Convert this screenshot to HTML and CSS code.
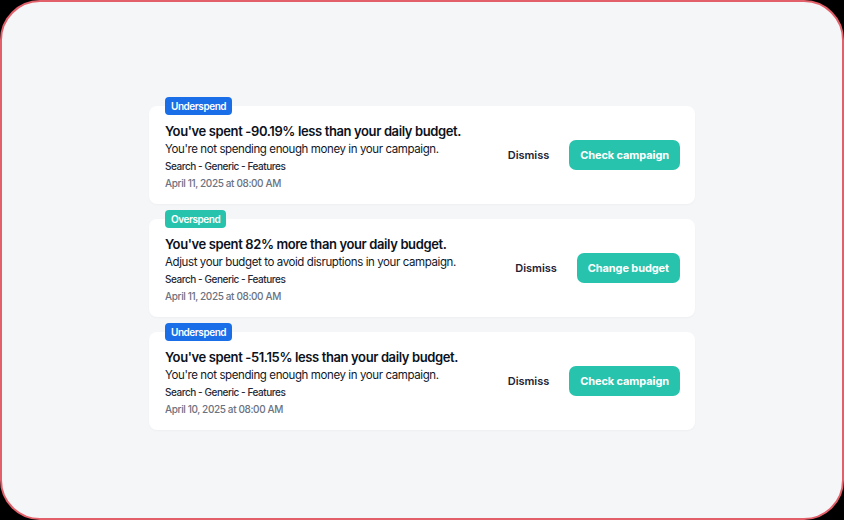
FILE: index.html
```html
<!DOCTYPE html>
<html>
<head>
<meta charset="utf-8">
<link rel="stylesheet" href="styles.css">
</head>
<body>
<div class="frame">
  <div class="list">
    <div class="item">
      <span class="badge badge-under">Underspend</span>
      <div class="card">
        <div class="info">
          <div class="title">You've spent -90.19% less than your daily budget.</div>
          <div class="desc">You're not spending enough money in your campaign.</div>
          <div class="campaign">Search - Generic - Features</div>
          <div class="date">April 11, 2025 at 08:00 AM</div>
        </div>
        <div class="actions">
          <button class="dismiss">Dismiss</button>
          <button class="primary">Check campaign</button>
        </div>
      </div>
    </div>
    <div class="item">
      <span class="badge badge-over">Overspend</span>
      <div class="card">
        <div class="info">
          <div class="title">You've spent 82% more than your daily budget.</div>
          <div class="desc">Adjust your budget to avoid disruptions in your campaign.</div>
          <div class="campaign">Search - Generic - Features</div>
          <div class="date">April 11, 2025 at 08:00 AM</div>
        </div>
        <div class="actions">
          <button class="dismiss">Dismiss</button>
          <button class="primary">Change budget</button>
        </div>
      </div>
    </div>
    <div class="item">
      <span class="badge badge-under">Underspend</span>
      <div class="card">
        <div class="info">
          <div class="title">You've spent -51.15% less than your daily budget.</div>
          <div class="desc">You're not spending enough money in your campaign.</div>
          <div class="campaign">Search - Generic - Features</div>
          <div class="date">April 10, 2025 at 08:00 AM</div>
        </div>
        <div class="actions">
          <button class="dismiss">Dismiss</button>
          <button class="primary">Check campaign</button>
        </div>
      </div>
    </div>
  </div>
</div>
</body>
</html>
```

FILE: styles.css
```css
* { box-sizing: border-box; }
html, body { margin: 0; padding: 0; background: #000; }
body {
  width: 844px;
  height: 520px;
  font-family: Inter, "Noto Sans", sans-serif;
  color: #0f172a;
}
.frame {
  width: 844px;
  height: 520px;
  border: 2px solid #e2606a;
  border-radius: 40px;
  background: #f5f6f8;
  display: flex;
  justify-content: center;
  padding-top: 95px;
}
.list {
  width: 546px;
  display: flex;
  flex-direction: column;
  gap: 6px;
}
.item {
  display: flex;
  flex-direction: column;
  align-items: flex-start;
}
.badge {
  position: relative;
  z-index: 1;
  margin-left: 16px;
  margin-bottom: -9px;
  height: 18px;
  line-height: 18px;
  padding: 0 6px;
  border-radius: 4px;
  font-size: 10px;
  font-weight: 600;
  letter-spacing: -0.45px;
  color: #fff;
}
.badge-under { background: #1a6ee8; }
.badge-over { background: #28c3ad; }
.card {
  width: 100%;
  background: #fff;
  border-radius: 8px;
  padding: 16px 15px 12px 16px;
  display: flex;
  align-items: center;
  justify-content: space-between;
  box-shadow: 0 1px 2px rgba(15, 23, 42, 0.03);
}
.title {
  font-size: 13px;
  font-weight: 600;
  line-height: 18px;
  letter-spacing: -0.38px;
  color: #0b1220;
}
.desc {
  font-size: 11.5px;
  line-height: 18px;
  letter-spacing: -0.4px;
  color: #111827;
}
.campaign {
  font-size: 10px;
  font-weight: 500;
  line-height: 17px;
  letter-spacing: -0.45px;
  color: #1f2937;
}
.date {
  font-size: 10px;
  font-weight: 500;
  line-height: 17px;
  letter-spacing: -0.38px;
  color: #6b7280;
}
.actions {
  display: flex;
  align-items: center;
  gap: 20px;
  padding-bottom: 4px;
}
button {
  font-family: inherit;
  border: none;
  cursor: pointer;
}
.dismiss {
  background: none;
  padding: 0;
  font-size: 11px;
  font-weight: 600;
  letter-spacing: -0.05px;
  color: #1e2235;
}
.primary {
  height: 30px;
  padding: 0 11px;
  border-radius: 7px;
  background: #28c3ad;
  color: #fff;
  font-size: 11px;
  font-weight: 700;
  letter-spacing: -0.1px;
}
```
